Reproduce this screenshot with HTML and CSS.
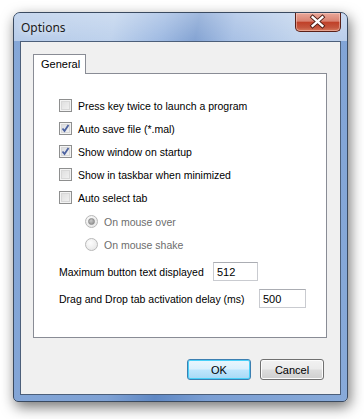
FILE: index.html
```html
<!DOCTYPE html>
<html>
<head>
<meta charset="utf-8">
<link rel="stylesheet" href="styles.css">
</head>
<body>
<div class="window">
  <div class="titlebar">
    <span class="title">Options</span>
    <div class="close">
      <svg width="46" height="19" viewBox="0 0 46 19">
        <path d="M18 5 L28 14 M28 5 L18 14" stroke="#4a1a12" stroke-width="4.2" stroke-linecap="square" fill="none"/>
        <path d="M18 5 L28 14 M28 5 L18 14" stroke="#ffffff" stroke-width="2.4" stroke-linecap="square" fill="none"/>
      </svg>
    </div>
  </div>
  <div class="client">
    <div class="tabs"><div class="tab">General</div></div>
    <div class="panel">
      <div class="row"><span class="cb"></span><span>Press key twice to launch a program</span></div>
      <div class="row"><span class="cb checked"><svg width="11" height="11" viewBox="0 0 11 11"><path d="M2.5 5.5 L4.5 8 L8.5 2" stroke="#4c62a0" stroke-width="1.8" fill="none"/></svg></span><span>Auto save file (*.mal)</span></div>
      <div class="row"><span class="cb checked"><svg width="11" height="11" viewBox="0 0 11 11"><path d="M2.5 5.5 L4.5 8 L8.5 2" stroke="#4c62a0" stroke-width="1.8" fill="none"/></svg></span><span>Show window on startup</span></div>
      <div class="row"><span class="cb"></span><span>Show in taskbar when minimized</span></div>
      <div class="row"><span class="cb"></span><span>Auto select tab</span></div>
      <div class="radios">
        <div class="row sub disabled"><span class="rb on"></span><span>On mouse over</span></div>
        <div class="row sub disabled"><span class="rb"></span><span>On mouse shake</span></div>
      </div>
      <div class="field first"><span class="lbl l1">Maximum button text displayed</span><span class="tb w1">512</span></div>
      <div class="field"><span class="lbl l2">Drag and Drop tab activation delay (ms)</span><span class="tb w2">500</span></div>
    </div>
    <div class="buttons">
      <div class="btn default">OK</div>
      <div class="btn">Cancel</div>
    </div>
  </div>
</div>
</body>
</html>
```
FILE: styles.css
```css
html, body { margin: 0; padding: 0; background: #ffffff; }
body { padding: 12px 0 0 13px; height: 419px; box-sizing: border-box; overflow: hidden; }

.window {
  width: 335px;
  height: 390px;
  box-sizing: border-box;
  border: 1px solid #3a4a60;
  border-radius: 7px 7px 5px 5px;
  background: linear-gradient(100deg, #86a8d8 0%, #7ea1d4 40%, #5f88c4 52%, #7a9ed3 65%, #88aad9 100%);
  padding: 0 6px 6px 6px;
  display: flex;
  flex-direction: column;
  box-shadow: 2px 5px 14px rgba(0,0,0,0.55);
  font-family: "Liberation Sans", Arial, sans-serif;
}

.titlebar {
  height: 28px;
  display: flex;
  align-items: flex-start;
  margin: 0 -6px;
  padding: 0 6px 0 7px;
  border-radius: 6px 6px 0 0;
  background:
    linear-gradient(180deg, rgba(255,255,255,0.35), rgba(255,255,255,0.15)),
    linear-gradient(100deg, #a9c2e5 0%, #b3cae9 30%, #8eaedd 45%, #6e93cb 55%, #98b5e0 66%, #b6cce9 85%, #aec5e7 100%);
}
.title {
  font-family: "Noto Sans", "Open Sans", sans-serif;
  font-size: 12px;
  color: #1a1a1a;
  margin-top: 6px;
  text-shadow: 0 0 6px rgba(255,255,255,0.9);
}
.close {
  margin-left: auto;
  width: 46px;
  height: 19px;
  box-sizing: border-box;
  border: 1px solid #5a2018;
  border-top: none;
  border-radius: 0 0 5px 5px;
  background: linear-gradient(180deg, #e9a89a 0%, #d98271 45%, #c04129 52%, #c4553d 80%, #d77b5e 100%);
  box-shadow: inset 0 0 0 1px rgba(255,220,210,0.45);
  display: flex;
}
.close svg { display: block; margin: -1px 0 0 -1px; }

.client {
  flex: 1;
  background: #f0f0f0;
  border: 1px solid #4c5f7a;
  padding: 12px 13px 0 12px;
  display: flex;
  flex-direction: column;
  font-size: 10.5px;
  color: #000;
}

.tabs { display: flex; height: 19px; }
.tab {
  width: 53px;
  box-sizing: border-box;
  height: 20px;
  border: 1px solid #898c95;
  border-bottom: none;
  background: #ffffff;
  padding: 3px 0 0 7px;
  font-size: 11px;
  position: relative;
  z-index: 1;
}
.panel {
  height: 265px;
  box-sizing: border-box;
  border: 1px solid #898c95;
  background: #ffffff;
  padding: 20px 0 0 25px;
  display: flex;
  flex-direction: column;
}

.row { height: 23px; display: flex; align-items: center; gap: 6px; }
.cb {
  width: 13px; height: 13px; box-sizing: border-box;
  border: 1px solid #8e8f8f;
  background: linear-gradient(135deg, #dcdcdc, #f4f4f4);
  box-shadow: inset 0 0 0 1px #f4f4f4, inset 0 0 0 2px #d8d8d8;
  display: flex; align-items: center; justify-content: center;
  flex: none;
}
.cb.checked { background: linear-gradient(135deg, #d6d8dc, #f6f6f6); }
.cb svg { display: block; }

.radios { margin-top: 1px; }
.row.sub { padding-left: 26px; }
.row.disabled { color: #6d6d6d; }
.rb {
  width: 13px; height: 13px; box-sizing: border-box;
  border-radius: 50%;
  border: 1px solid #b8b8b8;
  background: radial-gradient(circle at 40% 35%, #fdfdfd, #e2e2e2);
  flex: none;
  display: flex; align-items: center; justify-content: center;
}
.rb.on::after {
  content: "";
  width: 5px; height: 5px; border-radius: 50%;
  background: radial-gradient(circle at 40% 35%, #c8c8c8, #8a8a8a);
  border: 1px solid #8c8c8c;
}

.field { display: flex; align-items: center; height: 19px; margin-top: 8px; }
.field.first { margin-top: 6px; }
.lbl { flex: none; }
.l1 { width: 154px; }
.l2 { width: 200px; }
.tb {
  height: 19px; box-sizing: border-box;
  border: 1px solid #c9cbd0;
  border-top-color: #abadb3;
  background: #fff;
  padding: 3px 0 0 3px;
  font-size: 11px;
}
.w1 { width: 45px; }
.w2 { width: 47px; }

.buttons {
  display: flex;
  justify-content: flex-end;
  gap: 9px;
  margin-top: 21px;
  padding-right: 3px;
}
.btn {
  width: 64px; height: 21px; box-sizing: border-box;
  border: 1px solid #707070;
  border-radius: 3px;
  background: linear-gradient(180deg, #f2f2f2 0%, #ebebeb 48%, #dddddd 52%, #cfcfcf 100%);
  box-shadow: inset 0 0 0 1px #fcfcfc;
  display: flex; align-items: center; justify-content: center;
  font-size: 11px;
}
.btn.default {
  border-color: #3c7fb1;
  background: linear-gradient(180deg, #eaf6fd 0%, #d9f0fc 48%, #bee6fd 52%, #a7d9f5 100%);
  box-shadow: inset 0 0 0 1px #48d0f8;
}
```
